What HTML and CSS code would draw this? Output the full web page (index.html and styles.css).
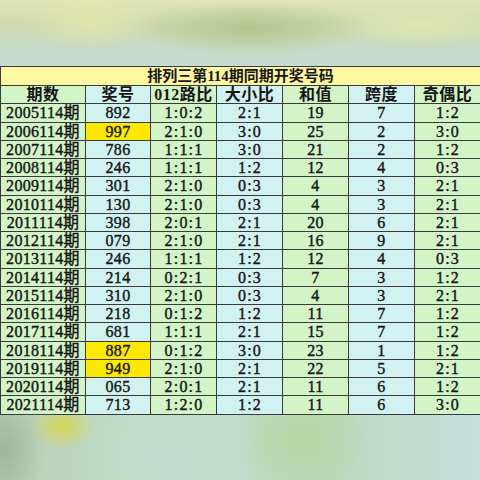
FILE: index.html
```html
<!DOCTYPE html>
<html lang="zh">
<head>
<meta charset="utf-8">
<link rel="stylesheet" href="styles.css">
</head>
<body>
<div class="bg-top"></div>
<table class="lot">
  <colgroup>
    <col class="c1"><col class="c2"><col class="c3"><col class="c4"><col class="c5"><col class="c6"><col class="c7">
  </colgroup>
  <tr class="title"><td colspan="7">排列三第114期同期开奖号码</td></tr>
  <tr class="head"><td class="g">期数</td><td class="b">奖号</td><td class="g">012路比</td><td class="b">大小比</td><td class="g">和值</td><td class="b">跨度</td><td class="g">奇偶比</td></tr>
  <tr><td class="g">2005114期</td><td class="b">892</td><td class="g r">1:0:2</td><td class="b r">2:1</td><td class="g">19</td><td class="b">7</td><td class="g r">1:2</td></tr>
  <tr><td class="g">2006114期</td><td class="y">997</td><td class="g r">2:1:0</td><td class="b r">3:0</td><td class="g">25</td><td class="b">2</td><td class="g r">3:0</td></tr>
  <tr><td class="g">2007114期</td><td class="b">786</td><td class="g r">1:1:1</td><td class="b r">3:0</td><td class="g">21</td><td class="b">2</td><td class="g r">1:2</td></tr>
  <tr><td class="g">2008114期</td><td class="b">246</td><td class="g r">1:1:1</td><td class="b r">1:2</td><td class="g">12</td><td class="b">4</td><td class="g r">0:3</td></tr>
  <tr><td class="g">2009114期</td><td class="b">301</td><td class="g r">2:1:0</td><td class="b r">0:3</td><td class="g">4</td><td class="b">3</td><td class="g r">2:1</td></tr>
  <tr><td class="g">2010114期</td><td class="b">130</td><td class="g r">2:1:0</td><td class="b r">0:3</td><td class="g">4</td><td class="b">3</td><td class="g r">2:1</td></tr>
  <tr><td class="g">2011114期</td><td class="b">398</td><td class="g r">2:0:1</td><td class="b r">2:1</td><td class="g">20</td><td class="b">6</td><td class="g r">2:1</td></tr>
  <tr><td class="g">2012114期</td><td class="b">079</td><td class="g r">2:1:0</td><td class="b r">2:1</td><td class="g">16</td><td class="b">9</td><td class="g r">2:1</td></tr>
  <tr><td class="g">2013114期</td><td class="b">246</td><td class="g r">1:1:1</td><td class="b r">1:2</td><td class="g">12</td><td class="b">4</td><td class="g r">0:3</td></tr>
  <tr><td class="g">2014114期</td><td class="b">214</td><td class="g r">0:2:1</td><td class="b r">0:3</td><td class="g">7</td><td class="b">3</td><td class="g r">1:2</td></tr>
  <tr><td class="g">2015114期</td><td class="b">310</td><td class="g r">2:1:0</td><td class="b r">0:3</td><td class="g">4</td><td class="b">3</td><td class="g r">2:1</td></tr>
  <tr><td class="g">2016114期</td><td class="b">218</td><td class="g r">0:1:2</td><td class="b r">1:2</td><td class="g">11</td><td class="b">7</td><td class="g r">1:2</td></tr>
  <tr><td class="g">2017114期</td><td class="b">681</td><td class="g r">1:1:1</td><td class="b r">2:1</td><td class="g">15</td><td class="b">7</td><td class="g r">1:2</td></tr>
  <tr><td class="g">2018114期</td><td class="y">887</td><td class="g r">0:1:2</td><td class="b r">3:0</td><td class="g">23</td><td class="b">1</td><td class="g r">1:2</td></tr>
  <tr><td class="g">2019114期</td><td class="y">949</td><td class="g r">2:1:0</td><td class="b r">2:1</td><td class="g">22</td><td class="b">5</td><td class="g r">2:1</td></tr>
  <tr><td class="g">2020114期</td><td class="b">065</td><td class="g r">2:0:1</td><td class="b r">2:1</td><td class="g">11</td><td class="b">6</td><td class="g r">1:2</td></tr>
  <tr><td class="g">2021114期</td><td class="b">713</td><td class="g r">1:2:0</td><td class="b r">1:2</td><td class="g">11</td><td class="b">6</td><td class="g r">3:0</td></tr>
</table>
</body>
</html>
```
FILE: styles.css
```css
html, body {
  margin: 0;
  padding: 0;
  width: 480px;
  height: 480px;
  overflow: hidden;
}
body {
  background:
    radial-gradient(ellipse 32px 24px at 62px 426px, rgba(214,214,80,0.95), rgba(214,214,80,0) 100%),
    radial-gradient(ellipse 40px 60px at 5px 450px, rgba(150,175,150,0.8), rgba(150,175,150,0) 100%),
    radial-gradient(ellipse 70px 60px at 300px 440px, rgba(180,214,160,0.9), rgba(180,214,160,0) 100%),
    radial-gradient(ellipse 90px 60px at 170px 460px, rgba(190,222,208,0.9), rgba(190,222,208,0) 100%),
    linear-gradient(90deg, #b8d0b4 0%, #c4dcc8 30%, #c4dccc 50%, #bcd8bc 65%, #c4e0dc 100%);
}
.bg-top {
  height: 66px;
  background:
    radial-gradient(ellipse 120px 28px at 250px 28px, rgba(178,196,140,0.95), rgba(178,196,140,0) 100%),
    radial-gradient(ellipse 70px 30px at 90px 20px, rgba(226,230,170,0.9), rgba(226,230,170,0) 100%),
    radial-gradient(ellipse 90px 22px at 420px 25px, rgba(226,232,176,0.9), rgba(226,232,176,0) 100%),
    linear-gradient(180deg, #e2e6b8 0%, #cfdab0 35%, #c6dcc8 75%, #c4dcd4 100%);
}
.lot {
  border-collapse: collapse;
  table-layout: fixed;
  width: 480px;
  font-family: "Liberation Serif", "Noto Sans CJK SC", serif;
  font-size: 16px;
  color: #161616;
}
.c1 { width: 85px; }
.c2 { width: 65px; }
.c3 { width: 66px; }
.c4 { width: 66px; }
.c5 { width: 66px; }
.c6 { width: 66px; }
.c7 { width: 66px; }
.lot td {
  border: 1px solid #3a3a3a;
  padding: 0;
  height: 17.25px;
  line-height: 17px;
  text-align: center;
  white-space: nowrap;
  font-weight: normal;
  letter-spacing: 0.3px;
  -webkit-text-stroke: 0.4px #161616;
}
.lot td.r { letter-spacing: 1.2px; text-indent: 1px; }
.lot tr.title td {
  height: 18px;
  line-height: 18px;
  background: #fdf8a0;
  font-size: 15px;
  font-weight: bold;
  letter-spacing: 0;
  -webkit-text-stroke: 0;
}
.lot tr.head td {
  font-size: 16px;
  font-weight: bold;
  letter-spacing: 0.5px;
  -webkit-text-stroke: 0;
}
.lot td.g { background: #d2f4c6; }
.lot td.b { background: #d2f2f2; }
.lot td.y { background: #fde800; }
```
